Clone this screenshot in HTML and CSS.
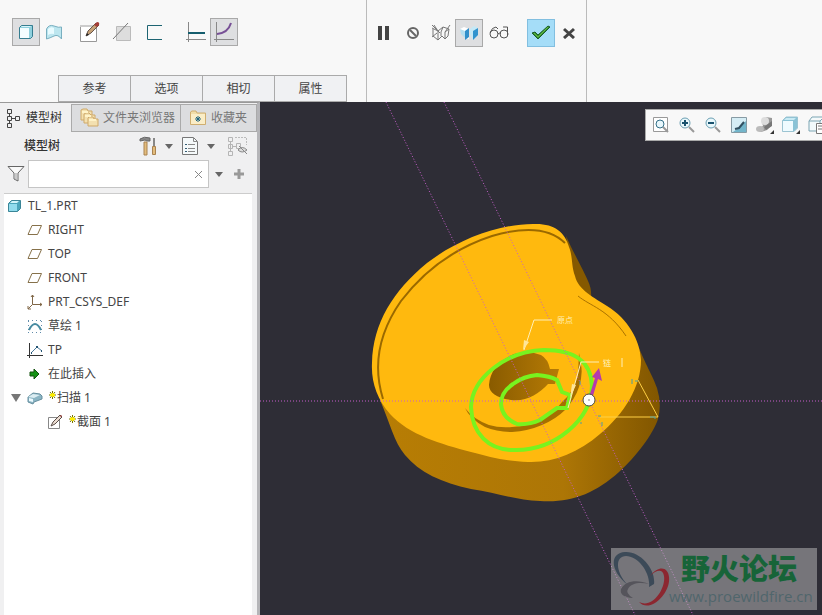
FILE: index.html
```html
<!DOCTYPE html>
<html lang="zh-CN">
<head>
  <meta charset="UTF-8">
  <meta name="viewport" content="width=device-width, initial-scale=1">
  <title>TL_1.PRT</title>
  <link rel="stylesheet" href="styles.css">
</head>
<body>
  <header class="ribbon">
    <section class="ribbon-left">
      <div class="tools">
        <button class="tool active" aria-label="实体">
          <svg width="18" height="18" viewBox="0 0 18 18"><path d="M2.500 4.500L4.500 2.500H15.500V13.500L13.500 15.500H2.500Z" fill="#8fd0dd" stroke="#357d90"/><path d="M3 5H12V15H3Z" fill="#f3fdff"/><path d="M4 4L5 3H14L13 4Z" fill="#d9f5fa"/></svg>
        </button>
        <button class="tool" aria-label="曲面">
          <svg width="18" height="18" viewBox="0 0 18 18"><path d="M1.500 6Q4 1 9 3T16.500 4V16Q13 11 9 13T1.500 16Z" fill="#bce6ef" stroke="#79afc0"/><path d="M3 6Q6 3 9 5V11Q6 10 3 12Z" fill="#e8fbff"/></svg>
        </button>
        <button class="tool gap-m" aria-label="草绘">
          <svg width="22" height="22" viewBox="0 0 22 22"><path d="M1.500 4.500H17.500V20.500H1.500Z" fill="#fff" stroke="#999"/><path d="M1 5H14" stroke="#ccc" stroke-width="2"/><path d="M7 15L9 10L17 2L20 4L12 12Z" fill="#c6a177" stroke="#66564c"/><path d="M15 4L18 1Q21 1 20 4L18 6Z" fill="#a43c36"/><path d="M7 15L8 12L10 14Z" fill="#222"/></svg>
        </button>
        <button class="tool gap-s" aria-label="移除材料">
          <svg width="20" height="20" viewBox="0 0 20 20"><path d="M4.500 4.500H18.500V18.500H4.500Z" fill="#ddd" stroke="#bbb"/><path d="M1 17L16 1" stroke="#777"/></svg>
        </button>
        <button class="tool gap-s" aria-label="薄板">
          <svg width="18" height="18" viewBox="0 0 18 18"><path d="M17 2.500H2.500V16.500H17" fill="none" stroke="#1d6472"/></svg>
        </button>
        <button class="tool gap-l" aria-label="恒定截面">
          <svg width="20" height="22" viewBox="0 0 20 22"><path d="M2.500 1V21M0 18.500H20" stroke="#888"/><path d="M2 12H19" stroke="#155d6d" stroke-width="2"/></svg>
        </button>
        <button class="tool active" aria-label="可变截面">
          <svg width="20" height="22" viewBox="0 0 20 22"><path d="M2.500 1V21M0 18.500H20" stroke="#888"/><path d="M3 13Q14 12 17 2" fill="none" stroke="#775096" stroke-width="2"/></svg>
        </button>
      </div>
      <nav class="dash-tabs">
        <button>参考</button>
        <button>选项</button>
        <button>相切</button>
        <button>属性</button>
      </nav>
    </section>
    <section class="ribbon-mid">
      <div class="tools">
        <button class="tool" aria-label="暂停">
          <svg width="12" height="14" viewBox="0 0 12 14"><path d="M1 0H5V14H1ZM8 0H12V14H8Z" fill="#444"/></svg>
        </button>
        <button class="tool gap-xs" aria-label="无预览">
          <svg width="14" height="14" viewBox="0 0 14 14"><circle cx="7" cy="7" r="5" fill="none" stroke="#666" stroke-width="2"/><path d="M4 4L10 10" stroke="#666" stroke-width="2"/></svg>
        </button>
        <button class="tool" aria-label="分离预览">
          <svg width="20" height="18" viewBox="0 0 20 18"><path d="M1 4L7 7L12 3L18 5L17 12L14 15L11 12L7 16L2 12V5M7 7V16M1 1L9 9M7 7L3 1M12 3L10 8V12M18 5L14 8V15M14 8L19 1M1 13L6 9" fill="none" stroke="#777"/></svg>
        </button>
        <button class="tool active" aria-label="连接预览">
          <svg width="20" height="16" viewBox="0 0 20 16"><path d="M1 4L5 2L10 4V14L6 13Z" fill="#fff"/><path d="M1 4L6 6V13L2 9Z" fill="#b4def0"/><path d="M6 6L10 3V12L6 15Z" fill="#318fca"/><path d="M11 4L15 1L19 3V10L14 15L11 9Z" fill="#c4e8f6"/><path d="M14 6L19 3V10L14 15Z" fill="#3293ce"/></svg>
        </button>
        <button class="tool gap-xs" aria-label="眼镜预览">
          <svg width="20" height="16" viewBox="0 0 20 16"><path d="M9 9Q10 7 12 9M1 8Q3 2 7 2L9 4M14 2H18.500V11" fill="none" stroke="#555"/><circle cx="5" cy="9" r="4" fill="none" stroke="#555"/><circle cx="15" cy="9" r="4" fill="none" stroke="#555"/></svg>
        </button>
        <button class="tool confirm gap-l" aria-label="确定">
          <svg width="20" height="16" viewBox="0 0 20 16"><path d="M1 8L4 7L7 10L17 1L19 2L7 14Z" fill="#328d34" stroke="#1b5e2b"/><path d="M3 8L7 12L17 2" fill="none" stroke="#65bd42"/></svg>
        </button>
        <button class="tool" aria-label="取消">
          <svg width="12" height="12" viewBox="0 0 12 12"><path d="M1 2L11 11M11 2L1 11" stroke="#444" stroke-width="3"/></svg>
        </button>
      </div>
    </section>
  </header>

  <main class="workspace">
    <aside class="sidebar">
      <div class="side-tabs">
        <button class="side-tab current">
          <svg width="14" height="20" viewBox="0 0 14 20"><path d="M1.500 1.500h4v4h-4zM1.500 8.500h4v4h-4zM1.500 15.500h4v4h-4zM9.500 8.500h4v4h-4zM3.500 5v4M3.500 12v4M5 10.500h5" fill="none" stroke="#444"/></svg>
          模型树
        </button>
        <button class="side-tab wide">
          <svg width="20" height="20" viewBox="0 0 20 20"><g fill="#f3e0b0" stroke="#cfa968"><path d="M1 2L3 1H7L8 3H12V12H1Z"/><path d="M4 6L6 5H9L11 7H15V15H4Z"/><path d="M8 10L9 9H13L14 11H18V18H8Z"/></g><path d="M2 4H8M5 8H11M9 12H16" stroke="#fff3c8" stroke-width="2"/></svg>
          文件夹浏览器
        </button>
        <button class="side-tab last">
          <svg width="18" height="18" viewBox="0 0 18 18"><path d="M1.500 15.500V3L3 2H7L8 4H16.500V15.500Z" fill="#f0dda9" stroke="#cfae70"/><path d="M2 5H16V15H2Z" fill="#faedc7"/><path d="M9 7V13M6 10H12M7 8L11 12M11 8L7 12" stroke="#20657f"/></svg>
          收藏夹
        </button>
      </div>
      <div class="tree-head">
        <h2>模型树</h2>
        <button class="icon-btn" aria-label="设置">
          <svg width="18" height="20" viewBox="0 0 18 20"><path d="M1 3Q5 0 11 2V5H8L6 4L1 5Z" fill="#888" stroke="#666"/><path d="M5 6H8V19H5Z" fill="#e2bc7c" stroke="#a98250"/><path d="M15 2V10" stroke="#888" stroke-width="2"/><path d="M13.500 10.500H16.500V18.500H13.500Z" fill="#e2bc7c" stroke="#a98250"/></svg>
        </button>
        <span class="arrow"></span>
        <button class="icon-btn second" aria-label="显示">
          <svg width="18" height="20" viewBox="0 0 18 20"><path d="M1.500 1.500H12.500L16.500 5.500V18.500H1.500Z" fill="#f5f9fa" stroke="#777"/><path d="M12.500 2V5.500H16M7 8.500H14M7 12.500H14M7 15.500H14" fill="none" stroke="#888"/><path d="M4 8.500H6M4 12.500H6M4 15.500H6" stroke="#355d75"/></svg>
        </button>
        <span class="arrow"></span>
        <button class="icon-btn third" aria-label="隐藏列">
          <svg width="22" height="20" viewBox="0 0 22 20"><path d="M1.500 1.500h4v4h-4zM1.500 8.500h4v4h-4zM1.500 15.500h4v4h-4zM3.500 5v11M5 10.500h5M9.500 7.500h4v5h-4z" fill="none" stroke="#b5b5b5"/><path d="M8 1.500H19.500V9" fill="none" stroke="#bbb" stroke-dasharray="2 1"/><path d="M11 14Q15 9 20 14Q15 18 11 14M12 10L20 18" fill="#ddd" stroke="#888"/></svg>
        </button>
      </div>
      <div class="filter">
        <svg width="18" height="18" viewBox="0 0 18 18"><path d="M1 1.500H17L11 8V16L7 14V8Z" fill="#fafafa" stroke="#666"/><path d="M9 8V15" stroke="#999"/></svg>
        <div class="filter-box">
          <input type="text" aria-label="过滤">
          <button aria-label="清除"><svg width="9" height="9" viewBox="0 0 9 9"><path d="M1 1L8 8M8 1L1 8" stroke="#888"/></svg></button>
        </div>
        <span class="arrow"></span>
        <button class="add" aria-label="添加"><svg width="12" height="12" viewBox="0 0 12 12"><path d="M6 1V11M1 6H11" stroke="#999" stroke-width="3"/></svg></button>
      </div>

      <ul class="tree">
        <li class="root">
          <svg width="16" height="16" viewBox="0 0 16 16"><path d="M1.500 5.500L4.500 2.500H13.500V10.500L10.500 13.500H1.500Z" fill="#4aa5ba" stroke="#3b8597"/><path d="M2 6H10V13H2Z" fill="#91dced"/><path d="M3 5L5 3H12L10 5Z" fill="#d2f5fa"/></svg>
          TL_1.PRT
        </li>
        <li><svg width="16" height="16" viewBox="0 0 16 16"><path d="M5 3.500H14.500L10.500 12.500H1Z" fill="none" stroke="#86714a"/></svg>RIGHT</li>
        <li><svg width="16" height="16" viewBox="0 0 16 16"><path d="M5 3.500H14.500L10.500 12.500H1Z" fill="none" stroke="#86714a"/></svg>TOP</li>
        <li><svg width="16" height="16" viewBox="0 0 16 16"><path d="M5 3.500H14.500L10.500 12.500H1Z" fill="none" stroke="#86714a"/></svg>FRONT</li>
        <li><svg width="16" height="16" viewBox="0 0 16 16"><path d="M5.500 1V10.500H15M5.500 10.500L1 15M4 3L5.500 1L7 3M13 9L15 10.500L13 12M1 12V15H4" fill="none" stroke="#806747"/></svg>PRT_CSYS_DEF</li>
        <li><svg width="16" height="16" viewBox="0 0 16 16"><path d="M1 2.500H15M1 14.500H15M1.500 3V14M14.500 3V14" stroke="#608baa" stroke-dasharray="1 3"/><path d="M2 12Q8 0 14 12" fill="none" stroke="#478ba1" stroke-width="2"/></svg>草绘 1</li>
        <li><svg width="16" height="16" viewBox="0 0 16 16"><path d="M2.500 1V16M0 13.500H16" stroke="#333"/><path d="M4 11L10 5L15 9" fill="none" stroke="#47799b"/><path d="M4 10h1v2h-1zM9 4h2v2h-2zM14 8h1v2h-1z" fill="#235474"/></svg>TP</li>
        <li><svg width="16" height="16" viewBox="0 0 16 16"><path d="M3 6H7V3L12 8L7 13V10H3Z" fill="#159215" stroke="#14520f"/></svg>在此插入</li>
        <li class="parent">
          <span class="expander"></span>
          <svg width="16" height="16" viewBox="0 0 16 16"><path d="M1 7L6 3L13 4L15 6V9L7 12L6 14L1 12Z" fill="#8bb5c4" stroke="#668f9f"/><path d="M1 7L6 4L13 5L7 8Z" fill="#dcedf2"/><path d="M2 8L6 9V12L2 11Z" fill="#edfaff"/></svg>
          <svg class="spark" width="9" height="24" viewBox="0 0 9 24"><path d="M4.500 5V13M1 9H8M2 6L7 12M7 6L2 12" stroke="#777300"/><path d="M4.500 7V11M2 9H7" stroke="#fff000" stroke-width="2"/></svg>扫描 1
        </li>
        <li class="child">
          <svg width="16" height="16" viewBox="0 0 16 16"><path d="M1.500 3.500H12.500V14.500H1.500Z" fill="#fff" stroke="#888"/><path d="M4 12L6 8L13 1L15 3L8 10Z" fill="#eadbd0" stroke="#5a4d47"/><path d="M13 2L14 1L15 2L14 3Z" fill="#a43c36"/></svg>
          <svg class="spark" width="9" height="24" viewBox="0 0 9 24"><path d="M4.500 5V13M1 9H8M2 6L7 12M7 6L2 12" stroke="#777300"/><path d="M4.500 7V11M2 9H7" stroke="#fff000" stroke-width="2"/></svg>截面 1
        </li>
      </ul>
    </aside>

    <section class="viewport">
      <svg class="scene" viewBox="260 102 562 513" preserveAspectRatio="xMinYMin slice">
        <defs>
          <linearGradient id="side" x1="385" y1="0" x2="660" y2="0" gradientUnits="userSpaceOnUse">
            <stop offset="0" stop-color="#b77d04"/>
            <stop offset=".65" stop-color="#ad7606"/>
            <stop offset="1" stop-color="#815600"/>
          </linearGradient>
          <linearGradient id="hole">
            <stop offset="0" stop-color="#895b00"/>
            <stop offset="1" stop-color="#b67b05"/>
          </linearGradient>
        </defs>
        <!-- side walls -->
        <path d="M566 236C574 254 585 273 588 281Q592 289 591 299L575 291Z" fill="#855900"/>
        <path d="M380 400C390 423 394 442 405 455C419 472 442 483 471 489C497 493 516 500 540 501C571 503 594 494 619 472C636 457 653 434 658 419Q662 404 657 388C652 374 646 366 637 343L560 420Z" fill="url(#side)"/>
        <!-- top face -->
        <path d="M372 363C373 323 393 291 427 263C457 240 498 224 533 224C554 223 565 232 569 247C573 257 571 265 575 276C578 290 595 298 607 306C628 319 640 340 641 360C641 387 624 414 600 434C578 453 553 463 528 462C504 461 490 457 471 452C441 444 409 435 390 414C377 399 371 382 372 363Z" fill="#ffb90e"/>
        <path d="M383 399C373 367 378 334 401 301C424 271 455 248 492 236C519 228 548 226 565 243" fill="none" stroke="#9a6900" stroke-width="2"/>
        <path d="M578 296C590 306 608 309 626 336" fill="none" stroke="#aa7200"/>
        <!-- bore and recess -->
        <path d="M489 385C490 370 500 360 514 354Q529 350 541 355Q548 359 550 369H559L555 384H548C539 394 526 402 511 400C497 398 489 393 489 385Z" fill="url(#hole)"/>
        <path d="M465 408Q470 419 485 427Q497 432 512 432Q528 431 542 425Q556 419 565 410Q575 399 579 387Q583 374 581 365L579 353L578 375Q573 393 562 402Q553 414 542 419Q528 426 512 427Q499 428 489 425Q473 419 465 408Z" fill="#a56f00"/>
        <!-- sweep section -->
        <path d="M471 407C472 378 506 351 544 350C576 350 591 362 592 386C591 420 555 450 516 450C488 451 472 433 471 407Z" fill="none" stroke="#78f31f" stroke-width="4"/>
        <path d="M557 380Q550 376 537 375Q524 376 513 384Q501 392 501 404Q502 418 517 424Q529 425 540 420L557 408H567L570 395L562 392Z" fill="none" stroke="#78f31f" stroke-width="4"/>
        <path d="M386 102L635 615M444 102L693 615M260 401H822" fill="none" stroke="#c65fcb" stroke-dasharray="1 2"/>
        <path d="M524 350L534 320H552M568 408L581 362H599M622 358V367" fill="none" stroke="#ffefb5"/>
        <path d="M523 350L524 340L529 342ZM570 398L572 384L576 385Z" fill="#ffe699"/>
        <path d="M600 417H658L638 380" fill="none" stroke="#ffd044"/>
        <path d="M632 379v5M635 381h3M650 417h5v2M580 381v4M598 416h3M602 422v4M580 423h2" stroke="#4d9da2" fill="none"/>
        <text x="557" y="323" class="note">原点</text>
        <text x="603" y="366" class="note">链</text>
        <path d="M589 397L595 378L592 377L599 368L602 381L598 379L592 399Z" fill="#b43bae"/>
        <circle cx="589" cy="400" r="6" fill="#fff" stroke="#444"/>
        <path d="M588 400H590" stroke="#888"/>
      </svg>

      <div class="view-tools">
        <button aria-label="重新调整"><svg width="18" height="18" viewBox="0 0 18 18"><path d="M1.500 1.500H15.500V15.500H1.500Z" fill="#fff" stroke="#999"/><circle cx="8" cy="8" r="4" fill="#e8f7fc" stroke="#347088"/><path d="M11 11L16 16" stroke="#999" stroke-width="2"/></svg></button>
        <button aria-label="放大"><svg width="18" height="18" viewBox="0 0 18 18"><circle cx="7" cy="7" r="5" fill="#e9f8fc" stroke="#6b9fb2"/><path d="M7 4V10M4 7H10" stroke="#17516e" stroke-width="2"/><path d="M11 11L16 16" stroke="#999" stroke-width="2"/></svg></button>
        <button aria-label="缩小"><svg width="18" height="18" viewBox="0 0 18 18"><circle cx="7" cy="7" r="5" fill="#e9f8fc" stroke="#6b9fb2"/><path d="M4 7H10" stroke="#17516e" stroke-width="2"/><path d="M11 11L16 16" stroke="#999" stroke-width="2"/></svg></button>
        <button aria-label="重画"><svg width="18" height="18" viewBox="0 0 18 18"><path d="M1.500 1.500H16.500V16.500H1.500Z" fill="#d5edf5" stroke="#879ba4"/><path d="M3 16Q10 12 16 5V16Z" fill="#72b5ca"/><path d="M5 13L9 12L14 6" fill="none" stroke="#315061" stroke-width="2"/></svg></button>
        <button aria-label="渲染"><svg width="20" height="20" viewBox="0 0 20 20"><path d="M2 14L8 11L7 7L11 2L17 3V10L12 15L6 17Z" fill="#999"/><circle cx="10" cy="6" r="4" fill="#ddd"/><path d="M9 12L17 6V11L11 15Z" fill="#777"/><ellipse cx="5" cy="14" rx="4" ry="3" fill="#bbb"/><path d="M19 15V19H15Z" fill="#333"/></svg></button>
        <button aria-label="显示样式"><svg width="20" height="20" viewBox="0 0 20 20"><path d="M1.500 5.500L5 2H16.500V13L13 16.500H1.500Z" fill="#8ac3d6" stroke="#9cc4d2"/><path d="M2 6H12V16H2Z" fill="#effbff"/><path d="M3 5L5 3H15L13 5Z" fill="#c8eaf4"/><path d="M19 15V19H15Z" fill="#333"/></svg></button>
        <button aria-label="已保存方向"><svg width="20" height="20" viewBox="0 0 20 20"><path d="M2 6L5 2H17V16H2ZM2 6H13L17 2M13 6V16" fill="#f2fafc" stroke="#7da5b3"/><path d="M9.500 8.500H18.500V18.500H9.500ZM11 11H17M11 14H17" fill="#fff" stroke="#777"/></svg></button>
      </div>

      <div class="watermark">
        <svg width="60" height="62" viewBox="0 0 60 62"><path d="M17 37C-2 22 -1 5 14 4C30 3 45 22 43 36L38 39C40 25 27 8 15 8C4 8 4 24 17 37Z" fill="#3c4a58"/><path d="M28 54C42 61 55 40 53 28C52 21 46 21 39 28C48 17 57 19 58 29C60 45 39 66 28 54Z" fill="#8c2730"/><path d="M38 36C26 31 14 33 10 41Q8 49 22 50Q14 45 17 41C20 35 29 34 38 36Z" fill="#55545b"/></svg>
        <div class="watermark-text">
          <strong>野火论坛</strong>
          <span>www.proewildfire.cn</span>
        </div>
      </div>
    </section>
  </main>
</body>
</html>
```

FILE: styles.css
```css
* {
  box-sizing: border-box;
}

body {
  margin: 0;
  height: 100vh;
  display: flex;
  flex-direction: column;
  overflow: hidden;
  font-family: "Noto Sans", "Noto Sans CJK SC", sans-serif;
  font-size: 12px;
  line-height: 16px;
  color: #444;
  background: #f8f8f8;
}

button {
  margin: 0;
  padding: 0;
  border: 0;
  background: none;
  color: inherit;
  font: inherit;
  flex-shrink: 0;
}

svg {
  display: block;
  flex-shrink: 0;
}

/* ribbon */
.ribbon {
  display: flex;
  height: 102px;
  flex-shrink: 0;
}

.ribbon-left {
  width: 367px;
  padding-top: 18px;
  display: flex;
  flex-direction: column;
  justify-content: space-between;
  border-right: 1px solid #bbb;
}

.ribbon-mid {
  width: 220px;
  padding-top: 19px;
  border-right: 1px solid #bbb;
}

.tools {
  display: flex;
}

.ribbon-left .tools {
  padding-left: 12px;
}

.ribbon-mid .tools {
  padding-left: 2px;
}

.tool {
  width: 28px;
  height: 28px;
  display: flex;
  align-items: center;
  justify-content: center;
  border: 1px solid transparent;
}

.tool.active {
  background: #dedfe1;
  border-color: #a9a9a9;
}

.tool.confirm {
  background: #a5ddf8;
  border-color: #82bfe0;
}

.gap-xs { margin-left: 2px; }
.gap-s { margin-left: 4px; }
.gap-m { margin-left: 8px; }
.gap-l { margin-left: 14px; }

.dash-tabs {
  display: flex;
  padding-left: 58px;
}

.dash-tabs button {
  width: 72px;
  height: 27px;
  border: 1px solid #aaa;
  border-left-width: 0;
  background: #f0f1f3;
}

.dash-tabs button:first-child {
  width: 73px;
  border-left-width: 1px;
}

/* model tree */
.workspace {
  display: flex;
  flex: 1;
  min-height: 0;
}

.sidebar {
  width: 260px;
  flex-shrink: 0;
  display: flex;
  flex-direction: column;
  padding-top: 1px;
  border-top: 1px solid #999;
  border-right: 3px solid #b5b5b8;
  background: #f0f0f1;
}

.side-tabs {
  display: flex;
  height: 28px;
}

.side-tab {
  display: flex;
  align-items: center;
  gap: 3px;
  padding-left: 8px;
  border: 1px solid #aaa;
  border-left-width: 0;
  background: #dcdddf;
  color: #777;
  white-space: nowrap;
}

.side-tab.current {
  width: 72px;
  gap: 6px;
  padding-left: 6px;
  border-width: 0 1px 0 0;
  background: #f0f0f1;
  color: #333;
}

.side-tab.wide {
  width: 109px;
}

.side-tab.last {
  flex: 1;
  gap: 4px;
}

.tree-head {
  display: flex;
  align-items: center;
  height: 28px;
  padding-left: 24px;
}

.tree-head h2 {
  flex: 1;
  margin: 0;
  font-size: 12px;
  font-weight: 500;
  color: #333;
}

.arrow {
  width: 8px;
  flex-shrink: 0;
  margin-left: 8px;
  border: 4px solid transparent;
  border-top: 5px solid #666;
  border-bottom: 0;
}

.icon-btn.second {
  margin-left: 8px;
}

.icon-btn.third {
  margin: 0 8px 0 12px;
}

.filter {
  display: flex;
  align-items: center;
  height: 28px;
  padding-left: 7px;
}

.filter-box {
  display: flex;
  flex: 1;
  min-width: 0;
  height: 28px;
  margin-left: 3px;
  border: 1px solid #c5c5c5;
  background: #fff;
}

.filter-box input {
  flex: 1;
  width: 100%;
  min-width: 0;
  padding: 0 4px;
  border: 0;
  outline: 0;
  background: none;
  font: inherit;
}

.filter-box button {
  padding: 0 5px;
}

.filter .arrow {
  margin-left: 6px;
}

.filter .add {
  margin: 0 12px 0 10px;
}

.tree {
  flex: 1;
  margin: 5px 5px 0 4px;
  padding: 0;
  border-top: 1px solid #ccc;
  background: #fff;
  list-style: none;
}

.tree li {
  display: flex;
  align-items: center;
  gap: 5px;
  height: 24px;
  padding-left: 23px;
}

.tree .root {
  padding-left: 3px;
}

.tree .parent {
  padding-left: 7px;
}

.tree .child {
  padding-left: 43px;
}

.tree .spark {
  margin-right: -5px;
}

.expander {
  width: 10px;
  margin-right: 1px;
  border: 5px solid transparent;
  border-top: 8px solid #777;
  border-bottom: 0;
}

/* graphics area */
.viewport {
  position: relative;
  flex: 1;
  min-width: 0;
  overflow: hidden;
  background: #2e2d36;
}

.scene {
  width: 100%;
  height: 100%;
}

.note {
  fill: #ffefb5;
  font-size: 8px;
}

.view-tools {
  position: absolute;
  top: 7px;
  right: -13px;
  display: flex;
  height: 32px;
  padding: 0 4px 0 2px;
  border: 1px solid #aaa;
  background: #f8f8f8;
}

.view-tools button {
  width: 26px;
  display: flex;
  align-items: center;
  justify-content: center;
}

.watermark {
  position: absolute;
  right: 5px;
  bottom: 5px;
  display: flex;
  width: 206px;
  height: 62px;
  background: rgba(190, 190, 190, 0.5);
}

.watermark-text {
  display: flex;
  flex-direction: column;
  margin-left: -2px;
}

.watermark strong {
  padding-left: 12px;
  font-family: "Noto Sans CJK SC", sans-serif;
  font-size: 29px;
  font-weight: 900;
  line-height: 38px;
  color: #176438;
}

.watermark span {
  font-family: "Open Sans", sans-serif;
  font-size: 15px;
  line-height: 20px;
  color: #50666c;
}
```
